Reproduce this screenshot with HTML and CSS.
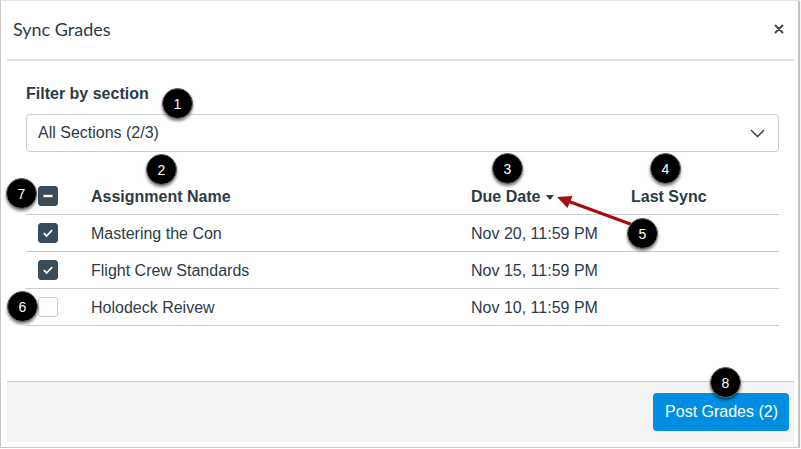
FILE: index.html
```html
<!DOCTYPE html>
<html>
<head>
<meta charset="utf-8">
<link rel="stylesheet" href="styles.css">
</head>
<body>
<div class="frame">
  <div class="modal">
    <div class="modal-header">
      <h2 class="title">Sync Grades</h2>
      <svg class="close" width="10" height="10" viewBox="0 0 10 10"><path d="M1.5 1.5 L8.5 8.5 M8.5 1.5 L1.5 8.5" stroke="#4a4a4a" stroke-width="2" stroke-linecap="round"/></svg>
    </div>
    <div class="modal-body">
      <div class="label">Filter by section</div>
      <div class="select">
        <span>All Sections (2/3)</span>
        <svg width="15" height="9" viewBox="0 0 15 9"><path d="M1 1 L7.5 7.5 L14 1" fill="none" stroke="#2d3b45" stroke-width="1.3"/></svg>
      </div>
      <div class="table">
        <div class="row head">
          <div class="cell cb"><span class="box on"><svg width="14" height="14" viewBox="0 0 14 14"><path d="M2.5 7 H11.5" stroke="#fff" stroke-width="2.4"/></svg></span></div>
          <div class="cell">Assignment Name</div>
          <div class="cell">Due Date <svg class="sort" width="8" height="5" viewBox="0 0 8 5"><path d="M0 0 H8 L4 5 Z" fill="#2d3b45"/></svg></div>
          <div class="cell">Last Sync</div>
        </div>
        <div class="row">
          <div class="cell cb"><span class="box on"><svg width="14" height="14" viewBox="0 0 14 14"><path d="M2.8 7.2 L5.6 10 L11.2 4" fill="none" stroke="#fff" stroke-width="1.8"/></svg></span></div>
          <div class="cell">Mastering the Con</div>
          <div class="cell">Nov 20, 11:59 PM</div>
          <div class="cell"></div>
        </div>
        <div class="row">
          <div class="cell cb"><span class="box on"><svg width="14" height="14" viewBox="0 0 14 14"><path d="M2.8 7.2 L5.6 10 L11.2 4" fill="none" stroke="#fff" stroke-width="1.8"/></svg></span></div>
          <div class="cell">Flight Crew Standards</div>
          <div class="cell">Nov 15, 11:59 PM</div>
          <div class="cell"></div>
        </div>
        <div class="row">
          <div class="cell cb"><span class="box"></span></div>
          <div class="cell">Holodeck Reivew</div>
          <div class="cell">Nov 10, 11:59 PM</div>
          <div class="cell"></div>
        </div>
      </div>
    </div>
    <div class="modal-footer">
      <button class="btn">Post Grades (2)</button>
    </div>
  </div>

  <svg class="arrow" width="801" height="449" viewBox="0 0 801 449">
    <line x1="633" y1="225" x2="569" y2="201.5" stroke="#a30d0d" stroke-width="3"/>
    <polygon points="557,197 572.5,196 567.5,208" fill="#a30d0d"/>
  </svg>
  <span class="badge b1">1</span>
  <span class="badge b2">2</span>
  <span class="badge b3">3</span>
  <span class="badge b4">4</span>
  <span class="badge b5">5</span>
  <span class="badge b6">6</span>
  <span class="badge b7">7</span>
  <span class="badge b8">8</span>
</div>
</body>
</html>
```

FILE: styles.css
```css
* { box-sizing: border-box; }
html, body { margin: 0; padding: 0; background: #fff; }
body { font-family: "Liberation Sans", Arial, sans-serif; color: #2d3b45; }

.frame {
  position: relative;
  width: 799px;
  height: 448px;
  border: 1px solid #c9c9c9;
  border-top-color: #e6e6e6;
  box-shadow: 1px 1px 1px rgba(0,0,0,0.25);
  padding: 0 4px 5px 6px;
  background: #fff;
}

.modal {
  height: 100%;
  display: flex;
  flex-direction: column;
}

.modal-header {
  height: 60px;
  border-bottom: 2px solid #e1e4e6;
  display: flex;
  align-items: center;
  justify-content: space-between;
  padding: 0 10px 2px 6px;
}
.title {
  margin: 0;
  font-family: Lato, "Liberation Sans", sans-serif;
  font-weight: 400;
  font-size: 18px;
  color: #2d3b45;
}
.close { display: block; }

.modal-body {
  flex: 1;
  padding: 23px 15px 0 19px;
}
.label {
  font-weight: bold;
  font-size: 16px;
  line-height: 20px;
  margin-bottom: 10px;
}
.select {
  height: 38px;
  border: 1px solid #c7cdd1;
  border-radius: 4px;
  display: flex;
  align-items: center;
  justify-content: space-between;
  padding: 0 13px 0 11px;
  font-size: 16px;
}
.select svg { display: block; }

.table { margin-top: 26px; }
.row {
  display: grid;
  grid-template-columns: 65px 380px 160px 1fr;
  height: 37px;
  border-bottom: 1px solid #c7cdd1;
  align-items: center;
  font-size: 16px;
  padding-top: 1px;
}
.row.head { font-weight: bold; }
.cell { display: flex; align-items: center; }
.cell.cb { padding-left: 12px; margin-top: -1px; }
.sort { margin-left: 6px; margin-top: 2px; }

.box {
  width: 20px;
  height: 20px;
  border-radius: 3px;
  border: 1px solid #c7cdd1;
  background: #fff;
  display: flex;
  align-items: center;
  justify-content: center;
}
.box.on { background: #394b58; border-color: #394b58; }
.box svg { display: block; }

.modal-footer {
  height: 61px;
  border-top: 1px solid #c7cdd1;
  background: #f4f4f4;
  display: flex;
  justify-content: flex-end;
  align-items: center;
  padding: 0 5px 0 0;
}
.btn {
  height: 38px;
  border: none;
  border-radius: 4px;
  background: #008ee2;
  color: #fff;
  font-family: "Liberation Sans", Arial, sans-serif;
  font-size: 16px;
  padding: 0 11px 0 12px;
}

.arrow { position: absolute; left: -1px; top: -1px; pointer-events: none; }

.badge {
  position: absolute;
  width: 31px;
  height: 31px;
  margin: -16px 0 0 -16px;
  border-radius: 50%;
  background: #000;
  border: 1px solid #666;
  color: #fff;
  font-size: 14px;
  display: flex;
  align-items: center;
  justify-content: center;
  box-shadow: 0 2px 3px rgba(0,0,0,0.5);
}
.b1 { left: 177px; top: 103px; }
.b2 { left: 161px; top: 169px; }
.b3 { left: 507px; top: 168px; }
.b4 { left: 665px; top: 168px; }
.b5 { left: 642px; top: 233px; }
.b6 { left: 22px; top: 306px; }
.b7 { left: 21px; top: 193px; }
.b8 { left: 725px; top: 382px; }
```
